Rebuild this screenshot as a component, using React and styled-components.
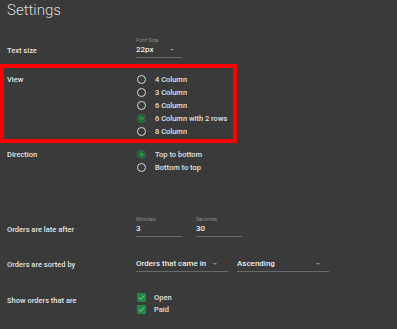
import styled, { createGlobalStyle } from "styled-components";

const Global = createGlobalStyle`
  html, body {
    margin: 0;
    padding: 0;
    background: #3a3a3a;
  }
  body {
    font-family: Roboto, "Liberation Sans", sans-serif;
    color: #e6e6e6;
  }
`

export default function App() {
    const vistas = ["4 Column", "3 Column", "6 Column", "6 Column with 2 rows", "8 Column"]
    const direcoes = ["Top to bottom", "Bottom to top"]

    return (
        <Page>
            <Global />
            <Title>Settings</Title>

            <Row $top={16}>
                <Label $pad={8}>Text size</Label>
                <Field $width={46}>
                    <Caption>Font Size</Caption>
                    <Value>
                        22px
                        <Arrow $right={8} />
                    </Value>
                </Field>
            </Row>

            <Highlight>
                <Label>View</Label>
                <Options>
                    {vistas.map((v, i) => (
                        <Option key={v}>
                            <Radio $on={i === 3} />
                            {v}
                        </Option>
                    ))}
                </Options>
            </Highlight>

            <Row $top={5}>
                <Label>Direction</Label>
                <Options>
                    {direcoes.map((d, i) => (
                        <Option key={d}>
                            <Radio $on={i === 0} />
                            {d}
                        </Option>
                    ))}
                </Options>
            </Row>

            <Row $top={41}>
                <Label $pad={8}>Orders are late after</Label>
                <Fields $gap={14}>
                    <Field $width={46}>
                        <Caption>Minutes</Caption>
                        <Value>3</Value>
                    </Field>
                    <Field $width={46}>
                        <Caption>Seconds</Caption>
                        <Value>30</Value>
                    </Field>
                </Fields>
            </Row>

            <Row $top={21}>
                <Label>Orders are sorted by</Label>
                <Fields $gap={9}>
                    <Field $width={92}>
                        <Value>
                            Orders that came in
                            <Arrow $right={11} />
                        </Value>
                    </Field>
                    <Field $width={92}>
                        <Value>
                            Ascending
                            <Arrow $right={9} />
                        </Value>
                    </Field>
                </Fields>
            </Row>

            <Row $top={19}>
                <Label $pad={3}>Show orders that are</Label>
                <Options>
                    <Check>
                        <Box />
                        Open
                    </Check>
                    <Check>
                        <Box />
                        Paid
                    </Check>
                </Options>
            </Row>
        </Page>
    )
}

function Box() {
    return (
        <CheckBox>
            <svg width="9" height="9" viewBox="0 0 9 9">
                <path d="M2 4.6 L3.8 6.3 L7.2 2.6" fill="none" stroke="#8fd19e" strokeWidth="1" />
            </svg>
        </CheckBox>
    )
}

const Page = styled.div`
    width: 397px;
    height: 329px;
    overflow: hidden;
    background: #3a3a3a;
`

const Title = styled.h1`
    margin: 0;
    padding-left: 7px;
    font-size: 15px;
    line-height: 20px;
    font-weight: 300;
    color: #dcdcdc;
`

const Row = styled.div`
    display: grid;
    grid-template-columns: 129px auto;
    margin-top: ${p => p.$top}px;
    padding-left: 7px;
`

const Highlight = styled.div`
    display: grid;
    grid-template-columns: 129px auto;
    box-sizing: border-box;
    width: 237px;
    margin-top: 6px;
    border: 4px solid #ff0000;
    padding: 5px 0 1px 3px;
`

const Label = styled.div`
    padding-top: ${p => p.$pad || 0}px;
    font-size: 7.5px;
    line-height: 13px;
    font-weight: 500;
    color: #e2e2e2;
`

const Options = styled.div`
    display: flex;
    flex-direction: column;
`

const Option = styled.div`
    display: flex;
    align-items: center;
    gap: 9px;
    height: 13px;
    padding-left: 1px;
    font-size: 7.5px;
    font-weight: 500;
    color: #e0e0e0;
`

const Radio = styled.span`
    box-sizing: border-box;
    width: 9px;
    height: 9px;
    border-radius: 50%;
    border: 1.3px solid ${p => p.$on ? "#1f8a43" : "#d8d8d8"};
    background: ${p => p.$on ? "radial-gradient(circle, #1f8a43 0 2.2px, transparent 2.6px)" : "transparent"};
`

const Check = styled.div`
    display: flex;
    align-items: center;
    gap: 8px;
    height: 12px;
    padding-left: 1px;
    font-size: 7.5px;
    font-weight: 500;
    color: #e0e0e0;
`

const CheckBox = styled.span`
    display: flex;
    width: 9px;
    height: 9px;
    background: #1f8a43;
    border-radius: 1px;
`

const Fields = styled.div`
    display: flex;
    gap: ${p => p.$gap}px;
`

const Field = styled.div`
    display: flex;
    flex-direction: column;
    width: ${p => p.$width}px;
`

const Caption = styled.div`
    font-size: 5.5px;
    line-height: 8px;
    color: #8a8a8a;
`

const Value = styled.div`
    position: relative;
    font-size: 8px;
    line-height: 12px;
    font-weight: 500;
    color: #ececec;
    border-bottom: 1px solid #6a6a6a;
    padding-bottom: 1px;
`

const Arrow = styled.span`
    position: absolute;
    right: ${p => p.$right}px;
    top: 5px;
    border-left: 2.5px solid transparent;
    border-right: 2.5px solid transparent;
    border-top: 2.5px solid #8a8a8a;
`
